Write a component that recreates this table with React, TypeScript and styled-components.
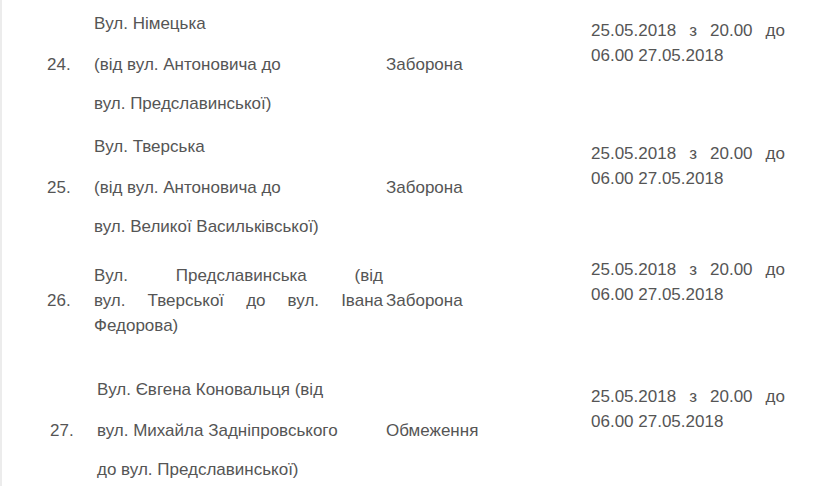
import React from "react"
import styled, { createGlobalStyle } from "styled-components"

type Row = {
  num: string
  lines: string[]
  justified?: boolean
  type: string
  height: number
  descTop: number
  timeTop: number
  gap?: number
  shift?: number
}

const rows: Row[] = [
  {
    num: "24.",
    lines: ["Вул. Німецька", "(від вул. Антоновича до", "вул. Предславинської)"],
    type: "Заборона",
    height: 125,
    descTop: 11,
    timeTop: 18,
  },
  {
    num: "25.",
    lines: ["Вул. Тверська", "(від вул. Антоновича до", "вул. Великої Васильківської)"],
    type: "Заборона",
    height: 125,
    descTop: 9,
    timeTop: 16,
  },
  {
    num: "26.",
    lines: ["Вул. Предславинська (від", "вул. Тверської до вул. Івана", "Федорова)"],
    justified: true,
    type: "Заборона",
    height: 111,
    descTop: 13,
    timeTop: 7,
  },
  {
    num: "27.",
    lines: [
      "Вул. Євгена Коновальця (від",
      "вул. Михайла Задніпровського",
      "до вул. Предславинської)",
    ],
    type: "Обмеження",
    height: 125,
    descTop: 16,
    timeTop: 23,
    gap: 16,
    shift: 3,
  },
]

const GlobalStyle = createGlobalStyle`
  html, body {
    margin: 0;
    padding: 0;
    background: #fff;
  }
  body {
    font-family: "Liberation Sans", Arial, sans-serif;
    font-size: 17px;
    color: #555;
  }
`

const Page = styled.div`
  min-height: 486px;
  border-left: 2px solid #ececec;
  overflow: hidden;
`

const TableRow = styled.div<{ $height: number }>`
  display: grid;
  grid-template-columns: 47px 292px 205px 194px;
  align-items: start;
  height: ${(p) => p.$height}px;
  padding-left: 45px;
  line-height: 25px;
`

const NumCell = styled.div<{ $top: number; $shift: number }>`
  margin-top: ${(p) => p.$top}px;
  padding-left: ${(p) => p.$shift}px;
`

const DescCell = styled.div<{ $top: number; $shift: number }>`
  margin-top: ${(p) => p.$top}px;
  padding-left: ${(p) => p.$shift}px;
  padding-right: 3px;
`

const ParaLine = styled.p<{ $gap: number }>`
  margin: ${(p) => p.$gap}px 0 0;
  white-space: nowrap;
`

const JustLine = styled.div<{ $fill: boolean }>`
  white-space: normal;
  text-align: ${(p) => (p.$fill ? "justify" : "left")};
  text-align-last: ${(p) => (p.$fill ? "justify" : "left")};
`

const TypeCell = styled.div<{ $top: number }>`
  margin-top: ${(p) => p.$top}px;
`

const TimeCell = styled.div<{ $top: number }>`
  margin-top: ${(p) => p.$top}px;
`

export default function App() {
  return (
    <Page>
      <GlobalStyle />
      {rows.map((row) => {
        const gap = row.gap ?? 16
        const gaps = [0, gap, 14]
        const secondLineTop = row.justified ? row.descTop + 25 : row.descTop + 25 + gap
        const shift = row.shift ?? 0
        return (
          <TableRow key={row.num} $height={row.height}>
            <NumCell $top={secondLineTop} $shift={shift}>
              {row.num}
            </NumCell>
            <DescCell $top={row.descTop} $shift={shift}>
              {row.justified
                ? row.lines.map((line, i) => (
                    <JustLine key={i} $fill={i < row.lines.length - 1}>
                      {line}
                    </JustLine>
                  ))
                : row.lines.map((line, i) => (
                    <ParaLine key={i} $gap={gaps[i]}>
                      {line}
                    </ParaLine>
                  ))}
            </DescCell>
            <TypeCell $top={secondLineTop}>{row.type}</TypeCell>
            <TimeCell $top={row.timeTop}>
              <JustLine $fill>25.05.2018 з 20.00 до</JustLine>
              <JustLine $fill={false}>06.00 27.05.2018</JustLine>
            </TimeCell>
          </TableRow>
        )
      })}
    </Page>
  )
}
